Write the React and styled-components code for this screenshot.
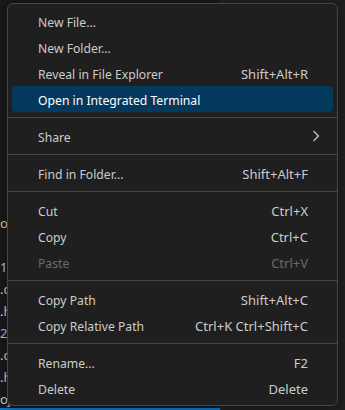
import React from "react"
import styled, { createGlobalStyle } from "styled-components"

const Global = createGlobalStyle`
  html, body {
    margin: 0;
    padding: 0;
    background: #181818;
  }
  body {
    font-family: "Noto Sans", "Open Sans", sans-serif;
  }
`

const Screen = styled.div`
  position: relative;
  width: 345px;
  height: 410px;
  overflow: hidden;
  background: #181818;
  display: flex;
`

const Explorer = styled.div`
  width: 221px;
  height: 100%;
  border-right: 1px solid #2b2b2b;
  display: flex;
  flex-direction: column;
  padding-top: 212px;
  box-sizing: border-box;
  font-family: "Noto Sans", sans-serif;
  font-size: 13px;
`

const FileRow = styled.div`
  height: 22px;
  line-height: 22px;
  color: ${(p) => p.color};
  white-space: nowrap;
  overflow: hidden;
  box-sizing: border-box;
  ${(p) =>
    p.selected &&
    `
    border-bottom: 2px solid #0078d4;
  `}
`

const Editor = styled.div`
  flex: 1;
  background: #1f1f1f;
`

const Menu = styled.div`
  position: absolute;
  left: 7px;
  top: 3px;
  width: 331px;
  box-sizing: border-box;
  padding: 4px 0;
  background: #1f1f1f;
  border: 1px solid #454545;
  border-radius: 6px;
  box-shadow: 0 2px 8px rgba(0, 0, 0, 0.36);
  font-family: "Noto Sans", "Open Sans", sans-serif;
  color: #cccccc;
`

const Item = styled.div`
  height: 26px;
  margin: 0 4px;
  padding: 0 25px 0 26px;
  border-radius: 4px;
  display: flex;
  align-items: center;
  justify-content: space-between;
  white-space: nowrap;
  background: ${(p) => (p.active ? "#04395e" : "transparent")};
  color: ${(p) => (p.active ? "#ffffff" : p.disabled ? "#6b6b6b" : "#cccccc")};
`

const Label = styled.span`
  font-size: 12.2px;
  padding-top: 3px;
`

const Keys = styled.span`
  font-size: 13px;
  padding-top: 2px;
`

const Chevron = styled.svg`
  width: 8px;
  height: 12px;
  margin-right: -12px;
`

const Separator = styled.div`
  height: 1px;
  margin: 5px 0;
  background: #454545;
`

const groups = [
  [
    { label: "New File..." },
    { label: "New Folder..." },
    { label: "Reveal in File Explorer", keys: "Shift+Alt+R" },
    { label: "Open in Integrated Terminal", active: true },
  ],
  [{ label: "Share", submenu: true }],
  [{ label: "Find in Folder...", keys: "Shift+Alt+F" }],
  [
    { label: "Cut", keys: "Ctrl+X" },
    { label: "Copy", keys: "Ctrl+C" },
    { label: "Paste", keys: "Ctrl+V", disabled: true },
  ],
  [
    { label: "Copy Path", keys: "Shift+Alt+C" },
    { label: "Copy Relative Path", keys: "Ctrl+K Ctrl+Shift+C" },
  ],
  [
    { label: "Rename...", keys: "F2" },
    { label: "Delete", keys: "Delete" },
  ],
]

const files = [
  { name: "or", color: "#e2c08d" },
  { name: "", color: "#cccccc" },
  { name: "1", color: "#9cc3f0" },
  { name: ".c", color: "#cccccc" },
  { name: ".h", color: "#cccccc" },
  { name: "2", color: "#9cc3f0" },
  { name: ".c", color: "#cccccc" },
  { name: ".h", color: "#cccccc" },
  { name: "oj", color: "#cccccc", selected: true },
]

export default function App() {
  return (
    <>
      <Global />
      <Screen>
        <Explorer>
          {files.map((f, i) => (
            <FileRow key={i} color={f.color} selected={f.selected}>
              {f.name}
            </FileRow>
          ))}
        </Explorer>
        <Editor />
        <Menu>
          {groups.map((group, gi) => (
            <React.Fragment key={gi}>
              {gi > 0 && <Separator />}
              {group.map((it) => (
                <Item key={it.label} active={it.active} disabled={it.disabled}>
                  <Label>{it.label}</Label>
                  {it.keys && <Keys>{it.keys}</Keys>}
                  {it.submenu && (
                    <Chevron viewBox="0 0 8 12">
                      <path d="M1.5 1 L6.5 6 L1.5 11" fill="none" stroke="#cccccc" strokeWidth="1.2" />
                    </Chevron>
                  )}
                </Item>
              ))}
            </React.Fragment>
          ))}
        </Menu>
      </Screen>
    </>
  )
}
